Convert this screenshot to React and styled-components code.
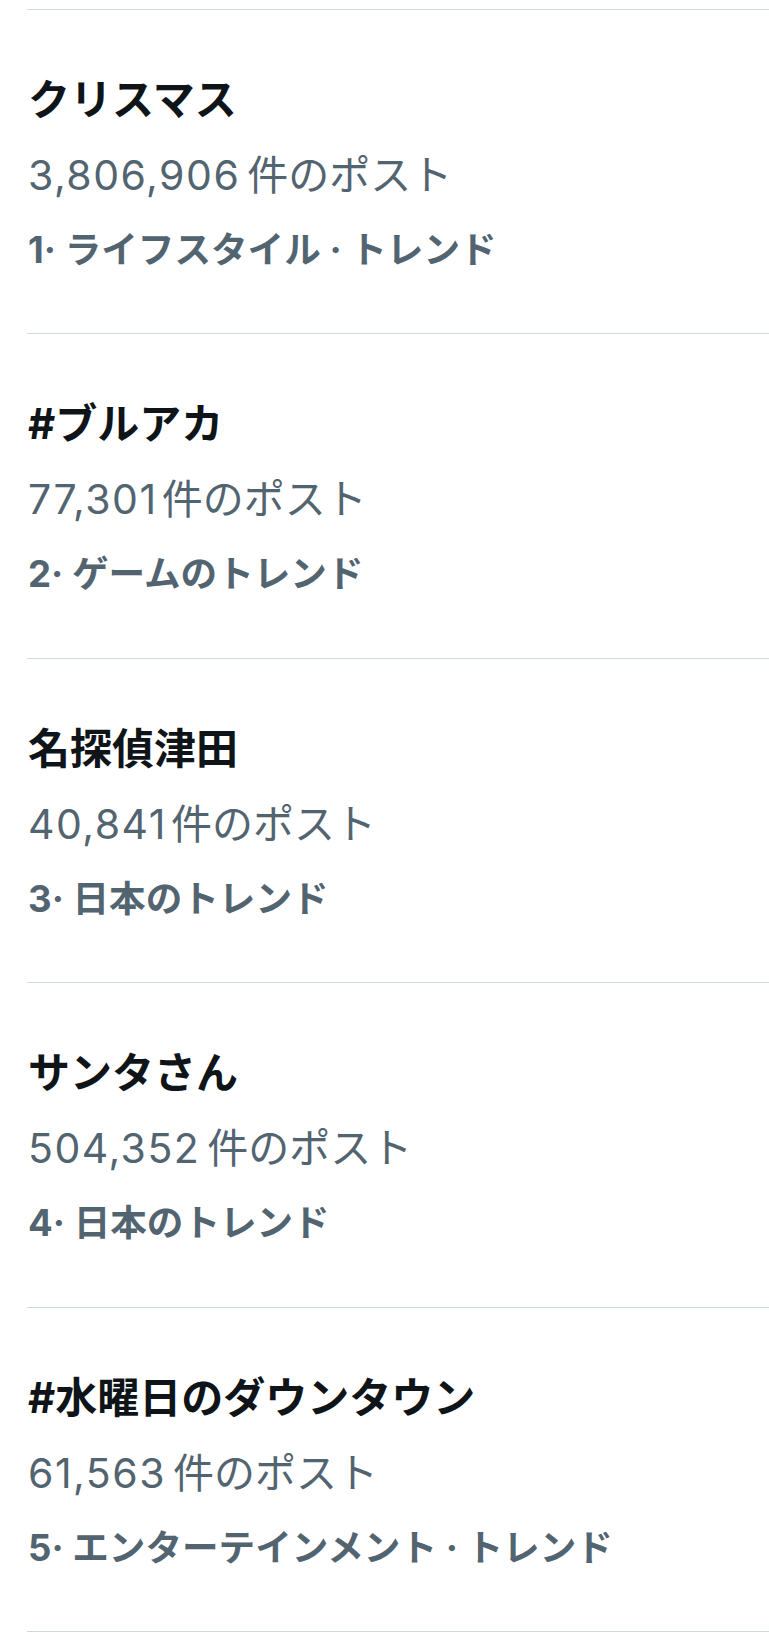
import React from "react";
import styled, { createGlobalStyle } from "styled-components";

const Global = createGlobalStyle`
  html, body {
    margin: 0;
    padding: 0;
    background: #ffffff;
  }
  body {
    font-family: "Inter", "Noto Sans CJK JP", sans-serif;
    -webkit-font-smoothing: antialiased;
  }
`;

const Page = styled.div`
  padding: 9px 0 0 27px;
  background: #ffffff;
`;

const List = styled.ul`
  list-style: none;
  margin: 0;
  padding: 0;
  border-bottom: 1px solid #cfd9de;
`;

const Row = styled.li`
  display: flex;
  flex-direction: column;
  border-top: 1px solid #cfd9de;
  padding: 51px 0 45.4px 1px;
`;

const Title = styled.div`
  font-size: 42px;
  line-height: 77px;
  font-weight: 700;
  color: #0f1419;
  white-space: nowrap;
`;

const Count = styled.div`
  font-size: 41px;
  line-height: 75px;
  font-weight: 400;
  color: #536471;
  white-space: nowrap;
`;

const Num = styled.span`
  letter-spacing: 1.5px;
  margin-right: ${(p) => (p.$spaced ? "7px" : "4px")};
`;

const Category = styled.div`
  font-size: 36.6px;
  line-height: 75px;
  font-weight: 700;
  color: #536471;
  white-space: nowrap;
`;

const trends = [
  { title: "クリスマス", num: "3,806,906", spaced: true, rank: "1", category: "ライフスタイル · トレンド" },
  { title: "#ブルアカ", num: "77,301", spaced: false, rank: "2", category: "ゲームのトレンド" },
  { title: "名探偵津田", num: "40,841", spaced: false, rank: "3", category: "日本のトレンド" },
  { title: "サンタさん", num: "504,352", spaced: true, rank: "4", category: "日本のトレンド" },
  { title: "#水曜日のダウンタウン", num: "61,563", spaced: true, rank: "5", category: "エンターテインメント · トレンド" },
];

export default function App() {
  return (
    <>
      <Global />
      <Page>
        <List>
          {trends.map((t) => (
            <Row key={t.rank}>
              <Title>{t.title}</Title>
              <Count>
                <Num $spaced={t.spaced}>{t.num}</Num>件のポスト
              </Count>
              <Category>{t.rank}· {t.category}</Category>
            </Row>
          ))}
        </List>
      </Page>
    </>
  );
}
